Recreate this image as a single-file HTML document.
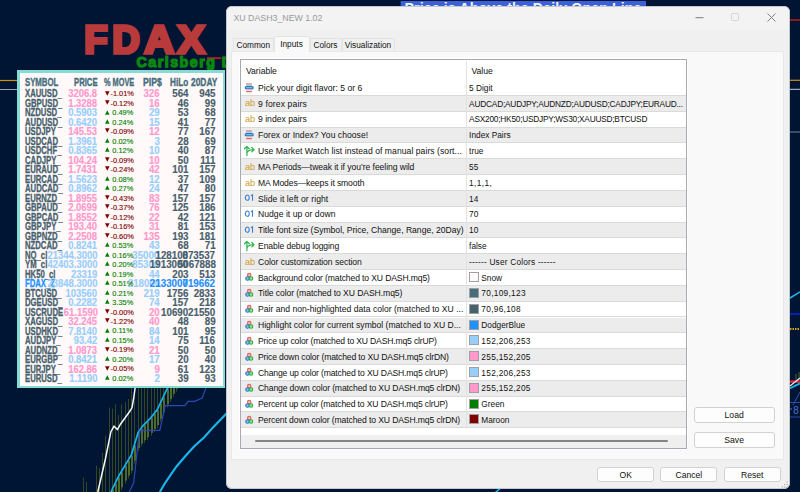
<!DOCTYPE html>
<html><head><meta charset="utf-8"><style>
*{margin:0;padding:0;box-sizing:border-box}
html,body{width:800px;height:492px;overflow:hidden;background:#001533;font-family:"Liberation Sans",sans-serif}
#stage{position:absolute;left:0;top:0;width:800px;height:492px;overflow:hidden}
.a{position:absolute}
.fdax{position:absolute;left:84px;top:18.5px;font:bold 41.5px/42px "Liberation Sans",sans-serif;color:#b93a3c;letter-spacing:1.6px;-webkit-text-stroke:1.2px #b93a3c}
.carl{position:absolute;left:136px;top:53.3px;font:bold 14px/14px "Liberation Sans",sans-serif;color:#0a8a14;white-space:nowrap;letter-spacing:0.9px;-webkit-text-stroke:0.5px #0a8a14}
#dash{position:absolute;left:17px;top:70px;width:208.3px;height:318.3px;background:#84dcd4}
#dashin{position:absolute;left:20px;top:73px;width:203px;height:312.5px;background:#fff9f9}
.b{position:absolute;font:bold 10.5px/10px "Liberation Sans",sans-serif;white-space:nowrap;transform-origin:left top;-webkit-text-stroke:0.15px currentColor}
.b.r{transform-origin:right top}
.p{position:absolute;width:40px;height:8px;font:7.4px/8px "Liberation Sans",sans-serif;white-space:nowrap;-webkit-text-stroke:0.12px currentColor}
#dlg{position:absolute;left:226px;top:6px;width:564px;height:483.2px;background:#f0f0f0;border-radius:6px;box-shadow:inset 0 0 0 1px #c6c8ce}
#tbar{position:absolute;left:227px;top:7px;width:562px;height:23px;background:#f3f3f3;border-radius:5px 5px 0 0}
#ttl{position:absolute;left:233.4px;top:12.5px;font:8.8px/10px "Liberation Sans",sans-serif;color:#9a9a9a;white-space:nowrap}
.tab{position:absolute;top:37.8px;height:13.8px;box-shadow:inset 1px 1px 0 #e4e4e4,inset -1px 0 0 #e4e4e4;background:#f0f0f0;font:8.3px/14px "Liberation Sans",sans-serif;color:#111;text-align:center;white-space:nowrap}
.tab.sel{top:35.8px;height:16.5px;background:#f9f9f9;z-index:2}
#panel{position:absolute;left:231.4px;top:51.2px;width:553px;height:409px;background:#f9f9f9;box-shadow:inset 0 0 0 1px #e8e8e8}
#grid{position:absolute;left:240px;top:59px;width:447.3px;height:390px;border:1px solid #a8aab2;box-shadow:0 0 0 1px #fff;background:#fff}
.hdrt{position:absolute;top:65.8px;font:8.6px/10px "Liberation Sans",sans-serif;color:#111}
.row{position:absolute;left:241px;width:445.3px;height:15.82px;border-bottom:1px solid #dadada}
.icw{position:absolute;left:244.2px;width:12px;height:12px}
.icw svg{display:block}
.ab{position:absolute;left:0.7px;top:0px;font:9.2px/11px "Liberation Sans",sans-serif;color:#cf9a30}
.o1{position:absolute;left:0.5px;top:-1px;font:8.4px/11px "Liberation Sans",sans-serif;color:#2a76c4;letter-spacing:-0.2px}
.nm{position:absolute;left:258px;width:207px;height:11px;font:8.6px/10px "Liberation Sans",sans-serif;color:#111;white-space:nowrap;overflow:hidden}
.vl{position:absolute;width:216px;height:11px;font:8.3px/10px "Liberation Sans",sans-serif;color:#111;white-space:nowrap;overflow:hidden}
.vsep{position:absolute;left:466.3px;top:61px;width:1px;height:368px;background:#e2e2e2}
.sw{position:absolute;left:469.4px;width:10px;height:10px;border:1px solid #a0a0a0}
#hscroll{position:absolute;left:241px;top:435px;width:445.3px;height:13px;background:#efefef}
#thumb{position:absolute;left:255px;top:440.4px;width:413px;height:2px;background:#858585;border-radius:1px}
.btn{position:absolute;border:1px solid #d2d2d2;border-radius:3px;background:#fdfdfd;font:8.6px/14px "Liberation Sans",sans-serif;color:#111;text-align:center}
</style></head><body><div id="stage">
<svg width="800" height="492" style="position:absolute;left:0;top:0">
<line x1="0" y1="80.5" x2="17" y2="80.5" stroke="#d0900f" stroke-width="1.2"/>
<line x1="0" y1="89.5" x2="17" y2="89.5" stroke="#9aa2b4" stroke-width="1"/>
<line x1="83.5" y1="477.6" x2="83.5" y2="492.0" stroke="#36461f" stroke-width="1"/><line x1="86.5" y1="482" x2="86.5" y2="492.0" stroke="#36461f" stroke-width="1"/><line x1="96.5" y1="465.7" x2="96.5" y2="492.0" stroke="#36461f" stroke-width="1"/><line x1="99.5" y1="468" x2="99.5" y2="492.0" stroke="#36461f" stroke-width="1"/><line x1="102.5" y1="452.8" x2="102.5" y2="492.0" stroke="#36461f" stroke-width="1"/><line x1="105.5" y1="435.6" x2="105.5" y2="492.0" stroke="#36461f" stroke-width="1"/><line x1="109.5" y1="407.5" x2="109.5" y2="492.0" stroke="#36461f" stroke-width="1"/><line x1="112.5" y1="408.6" x2="112.5" y2="492.0" stroke="#36461f" stroke-width="1"/><rect x="112.0" y="489.7" width="2" height="15" fill="#506a2a"/><line x1="115.5" y1="404.3" x2="115.5" y2="492.0" stroke="#36461f" stroke-width="1"/><rect x="115.0" y="483.5" width="2" height="15" fill="#506a2a"/><line x1="118.5" y1="415" x2="118.5" y2="492.0" stroke="#36461f" stroke-width="1"/><rect x="118.0" y="477.3" width="2" height="15" fill="#506a2a"/><line x1="121.5" y1="404.3" x2="121.5" y2="490.3" stroke="#36461f" stroke-width="1"/><rect x="121.0" y="472.3" width="2" height="15" fill="#506a2a"/><line x1="125.5" y1="402" x2="125.5" y2="483.6" stroke="#36461f" stroke-width="1"/><rect x="125.0" y="465.6" width="2" height="15" fill="#506a2a"/><line x1="128.5" y1="399" x2="128.5" y2="478.6" stroke="#36461f" stroke-width="1"/><rect x="128.0" y="460.6" width="2" height="15" fill="#506a2a"/><line x1="131.5" y1="380" x2="131.5" y2="473.6" stroke="#36461f" stroke-width="1"/><rect x="131.0" y="455.6" width="2" height="15" fill="#506a2a"/><line x1="134.5" y1="380" x2="134.5" y2="463.5" stroke="#36461f" stroke-width="1"/><rect x="134.0" y="445.5" width="2" height="15" fill="#506a2a"/><line x1="138.5" y1="380" x2="138.5" y2="451.1" stroke="#36461f" stroke-width="1"/><rect x="138.0" y="433.1" width="2" height="15" fill="#506a2a"/><line x1="141.5" y1="380" x2="141.5" y2="446.6" stroke="#36461f" stroke-width="1"/><rect x="141.0" y="428.6" width="2" height="15" fill="#506a2a"/><line x1="144.5" y1="380" x2="144.5" y2="443.2" stroke="#36461f" stroke-width="1"/><rect x="144.0" y="425.2" width="2" height="15" fill="#506a2a"/><line x1="147.5" y1="380" x2="147.5" y2="440.1" stroke="#36461f" stroke-width="1"/><rect x="147.0" y="422.1" width="2" height="15" fill="#506a2a"/><line x1="151.5" y1="380" x2="151.5" y2="435.9" stroke="#36461f" stroke-width="1"/><rect x="151.0" y="417.9" width="2" height="15" fill="#506a2a"/><line x1="154.5" y1="380" x2="154.5" y2="432.0" stroke="#36461f" stroke-width="1"/><rect x="154.0" y="414.0" width="2" height="15" fill="#506a2a"/><line x1="157.5" y1="380" x2="157.5" y2="428.1" stroke="#36461f" stroke-width="1"/><rect x="157.0" y="410.1" width="2" height="15" fill="#506a2a"/><line x1="160.5" y1="380" x2="160.5" y2="421.8" stroke="#36461f" stroke-width="1"/><rect x="160.0" y="403.8" width="2" height="15" fill="#506a2a"/><line x1="163.5" y1="380" x2="163.5" y2="415.4" stroke="#36461f" stroke-width="1"/><rect x="163.0" y="397.4" width="2" height="15" fill="#506a2a"/><line x1="167.5" y1="380" x2="167.5" y2="407.3" stroke="#36461f" stroke-width="1"/><rect x="167.0" y="389.3" width="2" height="15" fill="#506a2a"/><line x1="170.5" y1="380" x2="170.5" y2="402.1" stroke="#36461f" stroke-width="1"/><rect x="170.0" y="384.1" width="2" height="15" fill="#506a2a"/><line x1="173.5" y1="380" x2="173.5" y2="396.9" stroke="#36461f" stroke-width="1"/><rect x="173.0" y="378.9" width="2" height="15" fill="#506a2a"/><line x1="176.5" y1="380" x2="176.5" y2="391.8" stroke="#36461f" stroke-width="1"/><rect x="176.0" y="373.8" width="2" height="15" fill="#506a2a"/><line x1="180.5" y1="380" x2="180.5" y2="384.8" stroke="#36461f" stroke-width="1"/><rect x="180.0" y="366.8" width="2" height="15" fill="#506a2a"/>
<polyline points="97.8,492 105.4,459 110.9,431.7 114,426.3 117.4,429.6 120.6,424 129.3,412 132,407.8 133.7,398 135.4,386" fill="none" stroke="#f8f8f8" stroke-width="1.5"/>
<polyline points="110.9,492 118.5,476.3 131.5,454.6 138,432.8 142.4,426.3 151,417.6 157.6,409 166.3,390.4 170,384" fill="none" stroke="#1ab4e8" stroke-width="1.7"/>
<polyline points="129.3,492 133.7,482.8 138,443.7 140.2,430.4 159.8,430.4 165.2,405.7 184.8,405.7 188,401.3 194.6,401.3 202.2,398 205.4,389.3 207,385" fill="none" stroke="#2a48b0" stroke-width="1.2"/>
<polyline points="159.8,492 164.5,484 169.6,476.3 176.5,466.5 184.8,456.7 194,446.5 204.3,437.2 213,427.4 226,414 232,408" fill="none" stroke="#18b8ec" stroke-width="2.1"/>
<line x1="495.5" y1="492.5" x2="500.5" y2="488" stroke="#18b8ec" stroke-width="1.6"/><line x1="207" y1="58.1" x2="221" y2="58.1" stroke="#d02020" stroke-width="1.6"/>
<rect x="400.6" y="1" width="245.4" height="8" fill="#3c60d8"/><text x="404.5" y="12.8" font-family="Liberation Sans" font-weight="bold" font-size="14.2" fill="#f0f2fa" letter-spacing="0.1">Price is Above the Daily Open Line</text>
<line x1="790" y1="20" x2="800" y2="20" stroke="#c01818" stroke-width="1.5"/>
<line x1="790" y1="80.3" x2="800" y2="80.3" stroke="#d0900f" stroke-width="1.2"/>
<line x1="790" y1="89.3" x2="800" y2="89.3" stroke="#c8ccd8" stroke-width="1"/>
<line x1="790" y1="132" x2="800" y2="132" stroke="#7a8090" stroke-width="1"/>
<line x1="790" y1="298" x2="800" y2="292" stroke="#18b8ec" stroke-width="1.5"/>
<line x1="790" y1="314" x2="800" y2="314" stroke="#0a20e0" stroke-width="1.6"/>
<line x1="790" y1="329" x2="800" y2="329" stroke="#d8a020" stroke-width="2" stroke-dasharray="1.5 1"/>
<line x1="796" y1="382" x2="796" y2="374" stroke="#56632a" stroke-width="1"/>
<line x1="799" y1="382" x2="799" y2="372" stroke="#56632a" stroke-width="1"/>
<line x1="790" y1="381.6" x2="800" y2="381.6" stroke="#e02840" stroke-width="2.5"/>
<line x1="790" y1="386" x2="800" y2="378" stroke="#f0f0f0" stroke-width="1.2"/>
<line x1="790" y1="388.3" x2="800" y2="383.4" stroke="#18b8ec" stroke-width="1.8"/>
<rect x="788.5" y="402.5" width="14" height="14.5" fill="none" stroke="#2f4fb8" stroke-width="0.9"/><text x="793.2" y="413.6" font-family="Liberation Sans" font-size="10" fill="#4a6ed0">8</text><line x1="790" y1="409" x2="792" y2="409" stroke="#4a6ed0" stroke-width="1"/>
<line x1="793" y1="405" x2="800" y2="392" stroke="#3050c0" stroke-width="1"/>
</svg>
<svg width="230" height="80" style="position:absolute;left:0;top:0"><g font-family="Liberation Sans" font-weight="bold" font-size="38" fill="#b83a3a" stroke="#b83a3a" stroke-width="3.5" stroke-linejoin="miter"><text x="84.3" y="52.7">F</text><text x="112.3" y="52.7">D</text><text transform="translate(144.3,52.7) scale(1.08,1)">A</text><text transform="translate(177.6,52.7) scale(1.07,1)">X</text></g></svg>
<svg width="230" height="80" style="position:absolute;left:0;top:0"><text x="136.6" y="67.1" font-family="Liberation Sans" font-weight="bold" font-size="14.2" letter-spacing="1.5" fill="#0b880f" stroke="#0b880f" stroke-width="1.25">Carlsberg D</text></svg>
<div id="dash"></div><div id="dashin"></div>
<span class="b" style="left:24.8px;top:76.58px;color:#466d7b;transform:scaleX(0.74);-webkit-text-stroke:0.35px currentColor">SYMBOL</span><span class="b" style="left:74.4px;top:76.58px;color:#466d7b;transform:scaleX(0.735);-webkit-text-stroke:0.35px currentColor">PRICE</span><span class="b" style="left:103.7px;top:76.58px;color:#466d7b;transform:scaleX(0.7);-webkit-text-stroke:0.35px currentColor">% MOVE</span><span class="b" style="left:143.2px;top:76.58px;color:#466d7b;transform:scaleX(0.83);-webkit-text-stroke:0.35px currentColor">PIP$</span><span class="b" style="left:170.3px;top:76.58px;color:#466d7b;transform:scaleX(0.78);-webkit-text-stroke:0.35px currentColor">HiLo</span><span class="b" style="left:191.3px;top:76.58px;color:#466d7b;transform:scaleX(0.8);-webkit-text-stroke:0.35px currentColor">20DAY</span><span class="b" style="left:24.8px;top:88.48px;color:#46606c;transform:scaleX(0.735);-webkit-text-stroke:0.3px currentColor">XAUUSD_</span><span class="b r" style="right:702.5px;top:88.48px;color:#ff98cd;transform:scaleX(0.9);">3206.8</span><span class="b r" style="right:640.4px;top:88.48px;color:#ff98cd;transform:scaleX(0.92);">326</span><span class="b r" style="right:611.7px;top:88.48px;color:#46606c;transform:scaleX(0.93);">564</span><span class="b r" style="right:584.6px;top:88.48px;color:#46606c;transform:scaleX(0.93);">945</span><div class="p" style="left:105px;top:90.24px;color:#800000"><svg width="5" height="5" viewBox="0 0 5 5" style="position:absolute;left:0;top:0.3px"><path d="M0 0.2H4.6L2.3 4.8Z" fill="#800000"/></svg><span style="position:absolute;left:5.5px;top:0">-1.01%</span></div><span class="b" style="left:24.8px;top:97.97px;color:#46606c;transform:scaleX(0.735);-webkit-text-stroke:0.3px currentColor">GBPUSD_</span><span class="b r" style="right:702.5px;top:97.97px;color:#ff98cd;transform:scaleX(0.9);">1.3288</span><span class="b r" style="right:640.4px;top:97.97px;color:#ff98cd;transform:scaleX(0.92);">16</span><span class="b r" style="right:611.7px;top:97.97px;color:#46606c;transform:scaleX(0.93);">46</span><span class="b r" style="right:584.6px;top:97.97px;color:#46606c;transform:scaleX(0.93);">99</span><div class="p" style="left:105px;top:99.73px;color:#800000"><svg width="5" height="5" viewBox="0 0 5 5" style="position:absolute;left:0;top:0.3px"><path d="M0 0.2H4.6L2.3 4.8Z" fill="#800000"/></svg><span style="position:absolute;left:5.5px;top:0">-0.12%</span></div><span class="b" style="left:24.8px;top:107.46px;color:#46606c;transform:scaleX(0.735);-webkit-text-stroke:0.3px currentColor">NZDUSD_</span><span class="b r" style="right:702.5px;top:107.46px;color:#98cefd;transform:scaleX(0.9);">0.5903</span><span class="b r" style="right:640.4px;top:107.46px;color:#98cefd;transform:scaleX(0.92);">29</span><span class="b r" style="right:611.7px;top:107.46px;color:#46606c;transform:scaleX(0.93);">53</span><span class="b r" style="right:584.6px;top:107.46px;color:#46606c;transform:scaleX(0.93);">68</span><div class="p" style="left:105px;top:109.22px;color:#008000"><svg width="5" height="5" viewBox="0 0 5 5" style="position:absolute;left:0;top:0.3px"><path d="M0 4.8H4.6L2.3 0.2Z" fill="#008000"/></svg><span style="position:absolute;left:7.3px;top:0">0.49%</span></div><span class="b" style="left:24.8px;top:116.95px;color:#46606c;transform:scaleX(0.735);-webkit-text-stroke:0.3px currentColor">AUDUSD_</span><span class="b r" style="right:702.5px;top:116.95px;color:#98cefd;transform:scaleX(0.9);">0.6420</span><span class="b r" style="right:640.4px;top:116.95px;color:#98cefd;transform:scaleX(0.92);">15</span><span class="b r" style="right:611.7px;top:116.95px;color:#46606c;transform:scaleX(0.93);">41</span><span class="b r" style="right:584.6px;top:116.95px;color:#46606c;transform:scaleX(0.93);">77</span><div class="p" style="left:105px;top:118.71px;color:#008000"><svg width="5" height="5" viewBox="0 0 5 5" style="position:absolute;left:0;top:0.3px"><path d="M0 4.8H4.6L2.3 0.2Z" fill="#008000"/></svg><span style="position:absolute;left:7.3px;top:0">0.24%</span></div><span class="b" style="left:24.8px;top:126.44px;color:#46606c;transform:scaleX(0.735);-webkit-text-stroke:0.3px currentColor">USDJPY</span><span class="b r" style="right:702.5px;top:126.44px;color:#ff98cd;transform:scaleX(0.9);">145.53</span><span class="b r" style="right:640.4px;top:126.44px;color:#ff98cd;transform:scaleX(0.92);">12</span><span class="b r" style="right:611.7px;top:126.44px;color:#46606c;transform:scaleX(0.93);">77</span><span class="b r" style="right:584.6px;top:126.44px;color:#46606c;transform:scaleX(0.93);">167</span><div class="p" style="left:105px;top:128.2px;color:#800000"><svg width="5" height="5" viewBox="0 0 5 5" style="position:absolute;left:0;top:0.3px"><path d="M0 0.2H4.6L2.3 4.8Z" fill="#800000"/></svg><span style="position:absolute;left:5.5px;top:0">-0.09%</span></div><span class="b" style="left:24.8px;top:135.93px;color:#46606c;transform:scaleX(0.735);-webkit-text-stroke:0.3px currentColor">USDCAD_</span><span class="b r" style="right:702.5px;top:135.93px;color:#98cefd;transform:scaleX(0.9);">1.3961</span><span class="b r" style="right:640.4px;top:135.93px;color:#98cefd;transform:scaleX(0.92);">3</span><span class="b r" style="right:611.7px;top:135.93px;color:#46606c;transform:scaleX(0.93);">28</span><span class="b r" style="right:584.6px;top:135.93px;color:#46606c;transform:scaleX(0.93);">69</span><div class="p" style="left:105px;top:137.69px;color:#008000"><svg width="5" height="5" viewBox="0 0 5 5" style="position:absolute;left:0;top:0.3px"><path d="M0 4.8H4.6L2.3 0.2Z" fill="#008000"/></svg><span style="position:absolute;left:7.3px;top:0">0.02%</span></div><span class="b" style="left:24.8px;top:145.42px;color:#46606c;transform:scaleX(0.735);-webkit-text-stroke:0.3px currentColor">USDCHF_</span><span class="b r" style="right:702.5px;top:145.42px;color:#98cefd;transform:scaleX(0.9);">0.8365</span><span class="b r" style="right:640.4px;top:145.42px;color:#98cefd;transform:scaleX(0.92);">10</span><span class="b r" style="right:611.7px;top:145.42px;color:#46606c;transform:scaleX(0.93);">40</span><span class="b r" style="right:584.6px;top:145.42px;color:#46606c;transform:scaleX(0.93);">87</span><div class="p" style="left:105px;top:147.18px;color:#008000"><svg width="5" height="5" viewBox="0 0 5 5" style="position:absolute;left:0;top:0.3px"><path d="M0 4.8H4.6L2.3 0.2Z" fill="#008000"/></svg><span style="position:absolute;left:7.3px;top:0">0.12%</span></div><span class="b" style="left:24.8px;top:154.91px;color:#46606c;transform:scaleX(0.735);-webkit-text-stroke:0.3px currentColor">CADJPY_</span><span class="b r" style="right:702.5px;top:154.91px;color:#ff98cd;transform:scaleX(0.9);">104.24</span><span class="b r" style="right:640.4px;top:154.91px;color:#ff98cd;transform:scaleX(0.92);">10</span><span class="b r" style="right:611.7px;top:154.91px;color:#46606c;transform:scaleX(0.93);">50</span><span class="b r" style="right:584.6px;top:154.91px;color:#46606c;transform:scaleX(0.93);">111</span><div class="p" style="left:105px;top:156.67px;color:#800000"><svg width="5" height="5" viewBox="0 0 5 5" style="position:absolute;left:0;top:0.3px"><path d="M0 0.2H4.6L2.3 4.8Z" fill="#800000"/></svg><span style="position:absolute;left:5.5px;top:0">-0.09%</span></div><span class="b" style="left:24.8px;top:164.4px;color:#46606c;transform:scaleX(0.735);-webkit-text-stroke:0.3px currentColor">EURAUD_</span><span class="b r" style="right:702.5px;top:164.4px;color:#ff98cd;transform:scaleX(0.9);">1.7431</span><span class="b r" style="right:640.4px;top:164.4px;color:#ff98cd;transform:scaleX(0.92);">42</span><span class="b r" style="right:611.7px;top:164.4px;color:#46606c;transform:scaleX(0.93);">101</span><span class="b r" style="right:584.6px;top:164.4px;color:#46606c;transform:scaleX(0.93);">157</span><div class="p" style="left:105px;top:166.16px;color:#800000"><svg width="5" height="5" viewBox="0 0 5 5" style="position:absolute;left:0;top:0.3px"><path d="M0 0.2H4.6L2.3 4.8Z" fill="#800000"/></svg><span style="position:absolute;left:5.5px;top:0">-0.24%</span></div><span class="b" style="left:24.8px;top:173.89px;color:#46606c;transform:scaleX(0.735);-webkit-text-stroke:0.3px currentColor">EURCAD_</span><span class="b r" style="right:702.5px;top:173.89px;color:#98cefd;transform:scaleX(0.9);">1.5623</span><span class="b r" style="right:640.4px;top:173.89px;color:#98cefd;transform:scaleX(0.92);">12</span><span class="b r" style="right:611.7px;top:173.89px;color:#46606c;transform:scaleX(0.93);">37</span><span class="b r" style="right:584.6px;top:173.89px;color:#46606c;transform:scaleX(0.93);">109</span><div class="p" style="left:105px;top:175.65px;color:#008000"><svg width="5" height="5" viewBox="0 0 5 5" style="position:absolute;left:0;top:0.3px"><path d="M0 4.8H4.6L2.3 0.2Z" fill="#008000"/></svg><span style="position:absolute;left:7.3px;top:0">0.08%</span></div><span class="b" style="left:24.8px;top:183.38px;color:#46606c;transform:scaleX(0.735);-webkit-text-stroke:0.3px currentColor">AUDCAD_</span><span class="b r" style="right:702.5px;top:183.38px;color:#98cefd;transform:scaleX(0.9);">0.8962</span><span class="b r" style="right:640.4px;top:183.38px;color:#98cefd;transform:scaleX(0.92);">24</span><span class="b r" style="right:611.7px;top:183.38px;color:#46606c;transform:scaleX(0.93);">47</span><span class="b r" style="right:584.6px;top:183.38px;color:#46606c;transform:scaleX(0.93);">80</span><div class="p" style="left:105px;top:185.14px;color:#008000"><svg width="5" height="5" viewBox="0 0 5 5" style="position:absolute;left:0;top:0.3px"><path d="M0 4.8H4.6L2.3 0.2Z" fill="#008000"/></svg><span style="position:absolute;left:7.3px;top:0">0.27%</span></div><span class="b" style="left:24.8px;top:192.87px;color:#46606c;transform:scaleX(0.735);-webkit-text-stroke:0.3px currentColor">EURNZD_</span><span class="b r" style="right:702.5px;top:192.87px;color:#ff98cd;transform:scaleX(0.9);">1.8955</span><span class="b r" style="right:640.4px;top:192.87px;color:#ff98cd;transform:scaleX(0.92);">83</span><span class="b r" style="right:611.7px;top:192.87px;color:#46606c;transform:scaleX(0.93);">157</span><span class="b r" style="right:584.6px;top:192.87px;color:#46606c;transform:scaleX(0.93);">157</span><div class="p" style="left:105px;top:194.63px;color:#800000"><svg width="5" height="5" viewBox="0 0 5 5" style="position:absolute;left:0;top:0.3px"><path d="M0 0.2H4.6L2.3 4.8Z" fill="#800000"/></svg><span style="position:absolute;left:5.5px;top:0">-0.43%</span></div><span class="b" style="left:24.8px;top:202.36px;color:#46606c;transform:scaleX(0.735);-webkit-text-stroke:0.3px currentColor">GBPAUD_</span><span class="b r" style="right:702.5px;top:202.36px;color:#ff98cd;transform:scaleX(0.9);">2.0699</span><span class="b r" style="right:640.4px;top:202.36px;color:#ff98cd;transform:scaleX(0.92);">76</span><span class="b r" style="right:611.7px;top:202.36px;color:#46606c;transform:scaleX(0.93);">125</span><span class="b r" style="right:584.6px;top:202.36px;color:#46606c;transform:scaleX(0.93);">186</span><div class="p" style="left:105px;top:204.12px;color:#800000"><svg width="5" height="5" viewBox="0 0 5 5" style="position:absolute;left:0;top:0.3px"><path d="M0 0.2H4.6L2.3 4.8Z" fill="#800000"/></svg><span style="position:absolute;left:5.5px;top:0">-0.37%</span></div><span class="b" style="left:24.8px;top:211.85px;color:#46606c;transform:scaleX(0.735);-webkit-text-stroke:0.3px currentColor">GBPCAD_</span><span class="b r" style="right:702.5px;top:211.85px;color:#ff98cd;transform:scaleX(0.9);">1.8552</span><span class="b r" style="right:640.4px;top:211.85px;color:#ff98cd;transform:scaleX(0.92);">22</span><span class="b r" style="right:611.7px;top:211.85px;color:#46606c;transform:scaleX(0.93);">42</span><span class="b r" style="right:584.6px;top:211.85px;color:#46606c;transform:scaleX(0.93);">121</span><div class="p" style="left:105px;top:213.61px;color:#800000"><svg width="5" height="5" viewBox="0 0 5 5" style="position:absolute;left:0;top:0.3px"><path d="M0 0.2H4.6L2.3 4.8Z" fill="#800000"/></svg><span style="position:absolute;left:5.5px;top:0">-0.12%</span></div><span class="b" style="left:24.8px;top:221.34px;color:#46606c;transform:scaleX(0.735);-webkit-text-stroke:0.3px currentColor">GBPJPY_</span><span class="b r" style="right:702.5px;top:221.34px;color:#ff98cd;transform:scaleX(0.9);">193.40</span><span class="b r" style="right:640.4px;top:221.34px;color:#ff98cd;transform:scaleX(0.92);">31</span><span class="b r" style="right:611.7px;top:221.34px;color:#46606c;transform:scaleX(0.93);">81</span><span class="b r" style="right:584.6px;top:221.34px;color:#46606c;transform:scaleX(0.93);">153</span><div class="p" style="left:105px;top:223.1px;color:#800000"><svg width="5" height="5" viewBox="0 0 5 5" style="position:absolute;left:0;top:0.3px"><path d="M0 0.2H4.6L2.3 4.8Z" fill="#800000"/></svg><span style="position:absolute;left:5.5px;top:0">-0.16%</span></div><span class="b" style="left:24.8px;top:230.83px;color:#46606c;transform:scaleX(0.735);-webkit-text-stroke:0.3px currentColor">GBPNZD_</span><span class="b r" style="right:702.5px;top:230.83px;color:#ff98cd;transform:scaleX(0.9);">2.2508</span><span class="b r" style="right:640.4px;top:230.83px;color:#ff98cd;transform:scaleX(0.92);">135</span><span class="b r" style="right:611.7px;top:230.83px;color:#46606c;transform:scaleX(0.93);">193</span><span class="b r" style="right:584.6px;top:230.83px;color:#46606c;transform:scaleX(0.93);">181</span><div class="p" style="left:105px;top:232.59px;color:#800000"><svg width="5" height="5" viewBox="0 0 5 5" style="position:absolute;left:0;top:0.3px"><path d="M0 0.2H4.6L2.3 4.8Z" fill="#800000"/></svg><span style="position:absolute;left:5.5px;top:0">-0.60%</span></div><span class="b" style="left:24.8px;top:240.32px;color:#46606c;transform:scaleX(0.735);-webkit-text-stroke:0.3px currentColor">NZDCAD_</span><span class="b r" style="right:702.5px;top:240.32px;color:#98cefd;transform:scaleX(0.9);">0.8241</span><span class="b r" style="right:640.4px;top:240.32px;color:#98cefd;transform:scaleX(0.92);">43</span><span class="b r" style="right:611.7px;top:240.32px;color:#46606c;transform:scaleX(0.93);">68</span><span class="b r" style="right:584.6px;top:240.32px;color:#46606c;transform:scaleX(0.93);">71</span><div class="p" style="left:105px;top:242.08px;color:#008000"><svg width="5" height="5" viewBox="0 0 5 5" style="position:absolute;left:0;top:0.3px"><path d="M0 4.8H4.6L2.3 0.2Z" fill="#008000"/></svg><span style="position:absolute;left:7.3px;top:0">0.53%</span></div><span class="b" style="left:24.8px;top:249.81px;color:#46606c;transform:scaleX(0.735);-webkit-text-stroke:0.3px currentColor">NQ_cl</span><span class="b r" style="right:702.5px;top:249.81px;color:#98cefd;transform:scaleX(0.9);">21344.3000</span><span class="b r" style="right:640.4px;top:249.81px;color:#98cefd;transform:scaleX(0.92);">35000</span><span class="b r" style="right:611.7px;top:249.81px;color:#46606c;transform:scaleX(0.93);">128100</span><span class="b r" style="right:584.6px;top:249.81px;color:#46606c;transform:scaleX(0.93);">873537</span><div class="p" style="left:105px;top:251.57px;color:#008000"><svg width="5" height="5" viewBox="0 0 5 5" style="position:absolute;left:0;top:0.3px"><path d="M0 4.8H4.6L2.3 0.2Z" fill="#008000"/></svg><span style="position:absolute;left:7.3px;top:0">0.16%</span></div><span class="b" style="left:24.8px;top:259.3px;color:#46606c;transform:scaleX(0.735);-webkit-text-stroke:0.3px currentColor">YM_cl</span><span class="b r" style="right:702.5px;top:259.3px;color:#98cefd;transform:scaleX(0.9);">42403.3000</span><span class="b r" style="right:640.4px;top:259.3px;color:#98cefd;transform:scaleX(0.92);">85300</span><span class="b r" style="right:611.7px;top:259.3px;color:#46606c;transform:scaleX(0.93);">1913000</span><span class="b r" style="right:584.6px;top:259.3px;color:#46606c;transform:scaleX(0.93);">5067888</span><div class="p" style="left:105px;top:261.06px;color:#008000"><svg width="5" height="5" viewBox="0 0 5 5" style="position:absolute;left:0;top:0.3px"><path d="M0 4.8H4.6L2.3 0.2Z" fill="#008000"/></svg><span style="position:absolute;left:7.3px;top:0">0.20%</span></div><span class="b" style="left:24.8px;top:268.79px;color:#46606c;transform:scaleX(0.735);-webkit-text-stroke:0.3px currentColor">HK50_cl</span><span class="b r" style="right:702.5px;top:268.79px;color:#98cefd;transform:scaleX(0.9);">23319</span><span class="b r" style="right:640.4px;top:268.79px;color:#98cefd;transform:scaleX(0.92);">44</span><span class="b r" style="right:611.7px;top:268.79px;color:#46606c;transform:scaleX(0.93);">203</span><span class="b r" style="right:584.6px;top:268.79px;color:#46606c;transform:scaleX(0.93);">513</span><div class="p" style="left:105px;top:270.55px;color:#008000"><svg width="5" height="5" viewBox="0 0 5 5" style="position:absolute;left:0;top:0.3px"><path d="M0 4.8H4.6L2.3 0.2Z" fill="#008000"/></svg><span style="position:absolute;left:7.3px;top:0">0.19%</span></div><span class="b" style="left:24.8px;top:278.28px;color:#1e90ff;transform:scaleX(0.735);-webkit-text-stroke:0.3px currentColor">FDAX_Z</span><span class="b r" style="right:702.5px;top:278.28px;color:#98cefd;transform:scaleX(0.9);">23848.3000</span><span class="b r" style="right:640.4px;top:278.28px;color:#98cefd;transform:scaleX(0.92);">218000</span><span class="b r" style="right:611.7px;top:278.28px;color:#1e90ff;transform:scaleX(0.93);">2133000</span><span class="b r" style="right:584.6px;top:278.28px;color:#1e90ff;transform:scaleX(0.93);">719662</span><div class="p" style="left:105px;top:280.04px;color:#008000"><svg width="5" height="5" viewBox="0 0 5 5" style="position:absolute;left:0;top:0.3px"><path d="M0 4.8H4.6L2.3 0.2Z" fill="#008000"/></svg><span style="position:absolute;left:7.3px;top:0">0.51%</span></div><span class="b" style="left:24.8px;top:287.77px;color:#46606c;transform:scaleX(0.735);-webkit-text-stroke:0.3px currentColor">BTCUSD_</span><span class="b r" style="right:702.5px;top:287.77px;color:#98cefd;transform:scaleX(0.9);">103560</span><span class="b r" style="right:640.4px;top:287.77px;color:#98cefd;transform:scaleX(0.92);">219</span><span class="b r" style="right:611.7px;top:287.77px;color:#46606c;transform:scaleX(0.93);">1756</span><span class="b r" style="right:584.6px;top:287.77px;color:#46606c;transform:scaleX(0.93);">2833</span><div class="p" style="left:105px;top:289.53px;color:#008000"><svg width="5" height="5" viewBox="0 0 5 5" style="position:absolute;left:0;top:0.3px"><path d="M0 4.8H4.6L2.3 0.2Z" fill="#008000"/></svg><span style="position:absolute;left:7.3px;top:0">0.21%</span></div><span class="b" style="left:24.8px;top:297.26px;color:#46606c;transform:scaleX(0.735);-webkit-text-stroke:0.3px currentColor">DGEUSD_</span><span class="b r" style="right:702.5px;top:297.26px;color:#98cefd;transform:scaleX(0.9);">0.2282</span><span class="b r" style="right:640.4px;top:297.26px;color:#98cefd;transform:scaleX(0.92);">74</span><span class="b r" style="right:611.7px;top:297.26px;color:#46606c;transform:scaleX(0.93);">157</span><span class="b r" style="right:584.6px;top:297.26px;color:#46606c;transform:scaleX(0.93);">218</span><div class="p" style="left:105px;top:299.02px;color:#008000"><svg width="5" height="5" viewBox="0 0 5 5" style="position:absolute;left:0;top:0.3px"><path d="M0 4.8H4.6L2.3 0.2Z" fill="#008000"/></svg><span style="position:absolute;left:7.3px;top:0">3.35%</span></div><span class="b" style="left:24.8px;top:306.75px;color:#46606c;transform:scaleX(0.735);-webkit-text-stroke:0.3px currentColor">USCRUDE</span><span class="b r" style="right:702.5px;top:306.75px;color:#ff98cd;transform:scaleX(0.9);">61.1590</span><span class="b r" style="right:640.4px;top:306.75px;color:#ff98cd;transform:scaleX(0.92);">20</span><span class="b r" style="right:611.7px;top:306.75px;color:#46606c;transform:scaleX(0.93);">10690</span><span class="b r" style="right:584.6px;top:306.75px;color:#46606c;transform:scaleX(0.93);">21550</span><div class="p" style="left:105px;top:308.51px;color:#800000"><svg width="5" height="5" viewBox="0 0 5 5" style="position:absolute;left:0;top:0.3px"><path d="M0 0.2H4.6L2.3 4.8Z" fill="#800000"/></svg><span style="position:absolute;left:5.5px;top:0">-0.00%</span></div><span class="b" style="left:24.8px;top:316.24px;color:#46606c;transform:scaleX(0.735);-webkit-text-stroke:0.3px currentColor">XAGUSD_</span><span class="b r" style="right:702.5px;top:316.24px;color:#ff98cd;transform:scaleX(0.9);">32.245</span><span class="b r" style="right:640.4px;top:316.24px;color:#ff98cd;transform:scaleX(0.92);">40</span><span class="b r" style="right:611.7px;top:316.24px;color:#46606c;transform:scaleX(0.93);">48</span><span class="b r" style="right:584.6px;top:316.24px;color:#46606c;transform:scaleX(0.93);">89</span><div class="p" style="left:105px;top:318.0px;color:#800000"><svg width="5" height="5" viewBox="0 0 5 5" style="position:absolute;left:0;top:0.3px"><path d="M0 0.2H4.6L2.3 4.8Z" fill="#800000"/></svg><span style="position:absolute;left:5.5px;top:0">-1.22%</span></div><span class="b" style="left:24.8px;top:325.73px;color:#46606c;transform:scaleX(0.735);-webkit-text-stroke:0.3px currentColor">USDHKD_</span><span class="b r" style="right:702.5px;top:325.73px;color:#98cefd;transform:scaleX(0.9);">7.8140</span><span class="b r" style="right:640.4px;top:325.73px;color:#98cefd;transform:scaleX(0.92);">84</span><span class="b r" style="right:611.7px;top:325.73px;color:#46606c;transform:scaleX(0.93);">101</span><span class="b r" style="right:584.6px;top:325.73px;color:#46606c;transform:scaleX(0.93);">95</span><div class="p" style="left:105px;top:327.49px;color:#008000"><svg width="5" height="5" viewBox="0 0 5 5" style="position:absolute;left:0;top:0.3px"><path d="M0 4.8H4.6L2.3 0.2Z" fill="#008000"/></svg><span style="position:absolute;left:7.3px;top:0">0.11%</span></div><span class="b" style="left:24.8px;top:335.22px;color:#46606c;transform:scaleX(0.735);-webkit-text-stroke:0.3px currentColor">AUDJPY_</span><span class="b r" style="right:702.5px;top:335.22px;color:#98cefd;transform:scaleX(0.9);">93.42</span><span class="b r" style="right:640.4px;top:335.22px;color:#98cefd;transform:scaleX(0.92);">14</span><span class="b r" style="right:611.7px;top:335.22px;color:#46606c;transform:scaleX(0.93);">75</span><span class="b r" style="right:584.6px;top:335.22px;color:#46606c;transform:scaleX(0.93);">116</span><div class="p" style="left:105px;top:336.98px;color:#008000"><svg width="5" height="5" viewBox="0 0 5 5" style="position:absolute;left:0;top:0.3px"><path d="M0 4.8H4.6L2.3 0.2Z" fill="#008000"/></svg><span style="position:absolute;left:7.3px;top:0">0.15%</span></div><span class="b" style="left:24.8px;top:344.71px;color:#46606c;transform:scaleX(0.735);-webkit-text-stroke:0.3px currentColor">AUDNZD_</span><span class="b r" style="right:702.5px;top:344.71px;color:#ff98cd;transform:scaleX(0.9);">1.0873</span><span class="b r" style="right:640.4px;top:344.71px;color:#ff98cd;transform:scaleX(0.92);">21</span><span class="b r" style="right:611.7px;top:344.71px;color:#46606c;transform:scaleX(0.93);">50</span><span class="b r" style="right:584.6px;top:344.71px;color:#46606c;transform:scaleX(0.93);">50</span><div class="p" style="left:105px;top:346.47px;color:#800000"><svg width="5" height="5" viewBox="0 0 5 5" style="position:absolute;left:0;top:0.3px"><path d="M0 0.2H4.6L2.3 4.8Z" fill="#800000"/></svg><span style="position:absolute;left:5.5px;top:0">-0.19%</span></div><span class="b" style="left:24.8px;top:354.2px;color:#46606c;transform:scaleX(0.735);-webkit-text-stroke:0.3px currentColor">EURGBP_</span><span class="b r" style="right:702.5px;top:354.2px;color:#98cefd;transform:scaleX(0.9);">0.8421</span><span class="b r" style="right:640.4px;top:354.2px;color:#98cefd;transform:scaleX(0.92);">17</span><span class="b r" style="right:611.7px;top:354.2px;color:#46606c;transform:scaleX(0.93);">20</span><span class="b r" style="right:584.6px;top:354.2px;color:#46606c;transform:scaleX(0.93);">40</span><div class="p" style="left:105px;top:355.96px;color:#008000"><svg width="5" height="5" viewBox="0 0 5 5" style="position:absolute;left:0;top:0.3px"><path d="M0 4.8H4.6L2.3 0.2Z" fill="#008000"/></svg><span style="position:absolute;left:7.3px;top:0">0.20%</span></div><span class="b" style="left:24.8px;top:363.69px;color:#46606c;transform:scaleX(0.735);-webkit-text-stroke:0.3px currentColor">EURJPY_</span><span class="b r" style="right:702.5px;top:363.69px;color:#ff98cd;transform:scaleX(0.9);">162.86</span><span class="b r" style="right:640.4px;top:363.69px;color:#ff98cd;transform:scaleX(0.92);">9</span><span class="b r" style="right:611.7px;top:363.69px;color:#46606c;transform:scaleX(0.93);">61</span><span class="b r" style="right:584.6px;top:363.69px;color:#46606c;transform:scaleX(0.93);">123</span><div class="p" style="left:105px;top:365.45px;color:#800000"><svg width="5" height="5" viewBox="0 0 5 5" style="position:absolute;left:0;top:0.3px"><path d="M0 0.2H4.6L2.3 4.8Z" fill="#800000"/></svg><span style="position:absolute;left:5.5px;top:0">-0.05%</span></div><span class="b" style="left:24.8px;top:373.18px;color:#46606c;transform:scaleX(0.735);-webkit-text-stroke:0.3px currentColor">EURUSD_</span><span class="b r" style="right:702.5px;top:373.18px;color:#98cefd;transform:scaleX(0.9);">1.1190</span><span class="b r" style="right:640.4px;top:373.18px;color:#98cefd;transform:scaleX(0.92);">2</span><span class="b r" style="right:611.7px;top:373.18px;color:#46606c;transform:scaleX(0.93);">39</span><span class="b r" style="right:584.6px;top:373.18px;color:#46606c;transform:scaleX(0.93);">93</span><div class="p" style="left:105px;top:374.94px;color:#008000"><svg width="5" height="5" viewBox="0 0 5 5" style="position:absolute;left:0;top:0.3px"><path d="M0 4.8H4.6L2.3 0.2Z" fill="#008000"/></svg><span style="position:absolute;left:7.3px;top:0">0.02%</span></div>
<div id="dlg"></div>
<div id="tbar"></div>
<div id="ttl">XU DASH3_NEW 1.02</div>
<svg width="120" height="24" style="position:absolute;left:680px;top:6px">
 <line x1="15.5" y1="11.7" x2="23.5" y2="11.7" stroke="#7a7a7a" stroke-width="1"/>
 <rect x="51.5" y="7.5" width="7" height="7" fill="none" stroke="#d4d4d4" stroke-width="1" rx="1"/>
 <path d="M87.5 7.5L95.5 15.5M95.5 7.5L87.5 15.5" stroke="#808080" stroke-width="1"/>
</svg>
<div class="tab" style="left:233px;width:40.5px">Common</div>
<div class="tab sel" style="left:273.5px;width:36px;line-height:16px">Inputs</div>
<div class="tab" style="left:309.5px;width:32px">Colors</div>
<div class="tab" style="left:341.5px;width:53px">Visualization</div>
<div id="panel"></div>
<div id="grid"></div>
<div class="hdrt" style="left:246px">Variable</div>
<div class="hdrt" style="left:471.5px">Value</div>
<div class="row" style="top:80.20px;background:#ffffff"></div><div class="icw" style="top:82.60px"><svg width="12" height="12" viewBox="0 0 12 12"><rect x="2.1" y="0.5" width="5.8" height="1.1" fill="#e05a5a"/><rect x="2.1" y="1.6" width="5.8" height="1.5" fill="#a6d2ea"/><rect x="0.7" y="3.1" width="9.1" height="3.3" rx="1.65" fill="#2a78c0"/><rect x="2" y="4.3" width="6.5" height="0.9" fill="#a6d2ea"/><rect x="2.1" y="6.5" width="5.8" height="1.2" fill="#f4c4c4"/><rect x="2.1" y="8.1" width="5.8" height="1.1" fill="#e05a5a"/></svg></div><div class="nm" style="top:82.80px;letter-spacing:0.025px">Pick your digit flavor: 5 or 6</div><div class="vl" style="left:469.1px;top:82.80px;">5 Digit</div><div class="row" style="top:96.02px;background:#ececec"></div><div class="icw" style="top:98.42px"><span class="ab">ab</span></div><div class="nm" style="top:98.62px;letter-spacing:0.116px">9 forex pairs</div><div class="vl" style="left:469.1px;top:98.62px;letter-spacing:-0.2px;">AUDCAD;AUDJPY;AUDNZD;AUDUSD;CADJPY;EURAUD...</div><div class="row" style="top:111.84px;background:#ffffff"></div><div class="icw" style="top:114.24px"><span class="ab">ab</span></div><div class="nm" style="top:114.44px;letter-spacing:0.005px">9 index pairs</div><div class="vl" style="left:469.1px;top:114.44px;letter-spacing:-0.22px;">ASX200;HK50;USDJPY;WS30;XAUUSD;BTCUSD</div><div class="row" style="top:127.66px;background:#ececec"></div><div class="icw" style="top:130.06px"><svg width="12" height="12" viewBox="0 0 12 12"><rect x="2.1" y="0.5" width="5.8" height="1.1" fill="#e05a5a"/><rect x="2.1" y="1.6" width="5.8" height="1.5" fill="#a6d2ea"/><rect x="0.7" y="3.1" width="9.1" height="3.3" rx="1.65" fill="#2a78c0"/><rect x="2" y="4.3" width="6.5" height="0.9" fill="#a6d2ea"/><rect x="2.1" y="6.5" width="5.8" height="1.2" fill="#f4c4c4"/><rect x="2.1" y="8.1" width="5.8" height="1.1" fill="#e05a5a"/></svg></div><div class="nm" style="top:130.26px;letter-spacing:0.027px">Forex or Index? You choose!</div><div class="vl" style="left:469.1px;top:130.26px;">Index Pairs</div><div class="row" style="top:143.48px;background:#ffffff"></div><div class="icw" style="top:145.88px"><svg width="12" height="12" viewBox="0 0 12 12"><path d="M2.9 9.6V0.8M0.5 2.8L2.9 0.5L5.3 2.8M2.9 7Q3.6 4.2 9.4 3.7M7.8 1.5L10 3.7L7.8 5.9" stroke="#2cb84c" stroke-width="1.25" fill="none" stroke-linecap="round" stroke-linejoin="round"/></svg></div><div class="nm" style="top:146.08px;letter-spacing:0.048px">Use Market Watch list instead of manual pairs (sort...</div><div class="vl" style="left:469.1px;top:146.08px;">true</div><div class="row" style="top:159.30px;background:#ececec"></div><div class="icw" style="top:161.70px"><span class="ab">ab</span></div><div class="nm" style="top:161.90px;letter-spacing:-0.065px">MA Periods—tweak it if you’re feeling wild</div><div class="vl" style="left:469.1px;top:161.90px;">55</div><div class="row" style="top:175.12px;background:#ffffff"></div><div class="icw" style="top:177.52px"><span class="ab">ab</span></div><div class="nm" style="top:177.72px;letter-spacing:-0.127px">MA Modes—keeps it smooth</div><div class="vl" style="left:469.1px;top:177.72px;letter-spacing:0.4px;">1,1,1,</div><div class="row" style="top:190.94px;background:#ececec"></div><div class="icw" style="top:193.34px"><svg width="12" height="12" viewBox="0 0 12 12"><ellipse cx="3.3" cy="4.65" rx="1.95" ry="2.6" stroke="#3580c8" stroke-width="1.05" fill="none"/><path d="M8.5 7.7V1.6L6.9 2.9" stroke="#3580c8" stroke-width="1.1" fill="none" stroke-linejoin="round"/></svg></div><div class="nm" style="top:193.54px;letter-spacing:0.069px">Slide it left or right</div><div class="vl" style="left:469.1px;top:193.54px;">14</div><div class="row" style="top:206.76px;background:#ffffff"></div><div class="icw" style="top:209.16px"><svg width="12" height="12" viewBox="0 0 12 12"><ellipse cx="3.3" cy="4.65" rx="1.95" ry="2.6" stroke="#3580c8" stroke-width="1.05" fill="none"/><path d="M8.5 7.7V1.6L6.9 2.9" stroke="#3580c8" stroke-width="1.1" fill="none" stroke-linejoin="round"/></svg></div><div class="nm" style="top:209.36px;letter-spacing:0.031px">Nudge it up or down</div><div class="vl" style="left:469.1px;top:209.36px;">70</div><div class="row" style="top:222.58px;background:#ececec"></div><div class="icw" style="top:224.98px"><svg width="12" height="12" viewBox="0 0 12 12"><ellipse cx="3.3" cy="4.65" rx="1.95" ry="2.6" stroke="#3580c8" stroke-width="1.05" fill="none"/><path d="M8.5 7.7V1.6L6.9 2.9" stroke="#3580c8" stroke-width="1.1" fill="none" stroke-linejoin="round"/></svg></div><div class="nm" style="top:225.18px;letter-spacing:-0.008px">Title font size (Symbol, Price, Change, Range, 20Day)</div><div class="vl" style="left:469.1px;top:225.18px;">10</div><div class="row" style="top:238.40px;background:#ffffff"></div><div class="icw" style="top:240.80px"><svg width="12" height="12" viewBox="0 0 12 12"><path d="M2.9 9.6V0.8M0.5 2.8L2.9 0.5L5.3 2.8M2.9 7Q3.6 4.2 9.4 3.7M7.8 1.5L10 3.7L7.8 5.9" stroke="#2cb84c" stroke-width="1.25" fill="none" stroke-linecap="round" stroke-linejoin="round"/></svg></div><div class="nm" style="top:241.00px;letter-spacing:-0.098px">Enable debug logging</div><div class="vl" style="left:469.1px;top:241.00px;">false</div><div class="row" style="top:254.22px;background:#ececec"></div><div class="icw" style="top:256.62px"><span class="ab">ab</span></div><div class="nm" style="top:256.82px;letter-spacing:-0.047px">Color customization section</div><div class="vl" style="left:469.1px;top:256.82px;letter-spacing:0.2px;">------ User Colors ------</div><div class="row" style="top:270.04px;background:#ffffff"></div><div class="icw" style="top:272.44px"><svg width="12" height="12" viewBox="0 0 12 12"><circle cx="5.2" cy="3.1" r="1.75" fill="#f4b8b8" stroke="#e26464" stroke-width="1.1"/><circle cx="3.5" cy="6.5" r="1.75" fill="#8cc0ea" stroke="#2a76c4" stroke-width="1.1"/><circle cx="7" cy="6.5" r="1.75" fill="#90e0a0" stroke="#26b044" stroke-width="1.1"/></svg></div><div class="nm" style="top:272.64px;letter-spacing:-0.132px">Background color (matched to XU DASH.mq5)</div><div class="sw" style="top:272.04px;background:#fffafa"></div><div class="vl" style="left:481.3px;top:272.64px;">Snow</div><div class="row" style="top:285.86px;background:#ececec"></div><div class="icw" style="top:288.26px"><svg width="12" height="12" viewBox="0 0 12 12"><circle cx="5.2" cy="3.1" r="1.75" fill="#f4b8b8" stroke="#e26464" stroke-width="1.1"/><circle cx="3.5" cy="6.5" r="1.75" fill="#8cc0ea" stroke="#2a76c4" stroke-width="1.1"/><circle cx="7" cy="6.5" r="1.75" fill="#90e0a0" stroke="#26b044" stroke-width="1.1"/></svg></div><div class="nm" style="top:288.46px;letter-spacing:-0.082px">Title color (matched to XU DASH.mq5)</div><div class="sw" style="top:287.86px;background:#466d7b"></div><div class="vl" style="left:481.3px;top:288.46px;letter-spacing:0.3px;">70,109,123</div><div class="row" style="top:301.68px;background:#ffffff"></div><div class="icw" style="top:304.08px"><svg width="12" height="12" viewBox="0 0 12 12"><circle cx="5.2" cy="3.1" r="1.75" fill="#f4b8b8" stroke="#e26464" stroke-width="1.1"/><circle cx="3.5" cy="6.5" r="1.75" fill="#8cc0ea" stroke="#2a76c4" stroke-width="1.1"/><circle cx="7" cy="6.5" r="1.75" fill="#90e0a0" stroke="#26b044" stroke-width="1.1"/></svg></div><div class="nm" style="top:304.28px;letter-spacing:0.007px">Pair and non-highlighted data color (matched to XU ...</div><div class="sw" style="top:303.68px;background:#46606c"></div><div class="vl" style="left:481.3px;top:304.28px;letter-spacing:0.3px;">70,96,108</div><div class="row" style="top:317.50px;background:#ececec"></div><div class="icw" style="top:319.90px"><svg width="12" height="12" viewBox="0 0 12 12"><circle cx="5.2" cy="3.1" r="1.75" fill="#f4b8b8" stroke="#e26464" stroke-width="1.1"/><circle cx="3.5" cy="6.5" r="1.75" fill="#8cc0ea" stroke="#2a76c4" stroke-width="1.1"/><circle cx="7" cy="6.5" r="1.75" fill="#90e0a0" stroke="#26b044" stroke-width="1.1"/></svg></div><div class="nm" style="top:320.10px;letter-spacing:-0.012px">Highlight color for current symbol (matched to XU D...</div><div class="sw" style="top:319.50px;background:#1e90ff"></div><div class="vl" style="left:481.3px;top:320.10px;">DodgerBlue</div><div class="row" style="top:333.32px;background:#ffffff"></div><div class="icw" style="top:335.72px"><svg width="12" height="12" viewBox="0 0 12 12"><circle cx="5.2" cy="3.1" r="1.75" fill="#f4b8b8" stroke="#e26464" stroke-width="1.1"/><circle cx="3.5" cy="6.5" r="1.75" fill="#8cc0ea" stroke="#2a76c4" stroke-width="1.1"/><circle cx="7" cy="6.5" r="1.75" fill="#90e0a0" stroke="#26b044" stroke-width="1.1"/></svg></div><div class="nm" style="top:335.92px;letter-spacing:-0.166px">Price up color (matched to XU DASH.mq5 clrUP)</div><div class="sw" style="top:335.32px;background:#98cefd"></div><div class="vl" style="left:481.3px;top:335.92px;letter-spacing:0.3px;">152,206,253</div><div class="row" style="top:349.14px;background:#ececec"></div><div class="icw" style="top:351.54px"><svg width="12" height="12" viewBox="0 0 12 12"><circle cx="5.2" cy="3.1" r="1.75" fill="#f4b8b8" stroke="#e26464" stroke-width="1.1"/><circle cx="3.5" cy="6.5" r="1.75" fill="#8cc0ea" stroke="#2a76c4" stroke-width="1.1"/><circle cx="7" cy="6.5" r="1.75" fill="#90e0a0" stroke="#26b044" stroke-width="1.1"/></svg></div><div class="nm" style="top:351.74px;letter-spacing:-0.147px">Price down color (matched to XU DASH.mq5 clrDN)</div><div class="sw" style="top:351.14px;background:#ff98cd"></div><div class="vl" style="left:481.3px;top:351.74px;letter-spacing:0.3px;">255,152,205</div><div class="row" style="top:364.96px;background:#ffffff"></div><div class="icw" style="top:367.36px"><svg width="12" height="12" viewBox="0 0 12 12"><circle cx="5.2" cy="3.1" r="1.75" fill="#f4b8b8" stroke="#e26464" stroke-width="1.1"/><circle cx="3.5" cy="6.5" r="1.75" fill="#8cc0ea" stroke="#2a76c4" stroke-width="1.1"/><circle cx="7" cy="6.5" r="1.75" fill="#90e0a0" stroke="#26b044" stroke-width="1.1"/></svg></div><div class="nm" style="top:367.56px;letter-spacing:-0.152px">Change up color (matched to XU DASH.mq5 clrUP)</div><div class="sw" style="top:366.96px;background:#98cefd"></div><div class="vl" style="left:481.3px;top:367.56px;letter-spacing:0.3px;">152,206,253</div><div class="row" style="top:380.78px;background:#ececec"></div><div class="icw" style="top:383.18px"><svg width="12" height="12" viewBox="0 0 12 12"><circle cx="5.2" cy="3.1" r="1.75" fill="#f4b8b8" stroke="#e26464" stroke-width="1.1"/><circle cx="3.5" cy="6.5" r="1.75" fill="#8cc0ea" stroke="#2a76c4" stroke-width="1.1"/><circle cx="7" cy="6.5" r="1.75" fill="#90e0a0" stroke="#26b044" stroke-width="1.1"/></svg></div><div class="nm" style="top:383.38px;letter-spacing:-0.128px">Change down color (matched to XU DASH.mq5 clrDN)</div><div class="sw" style="top:382.78px;background:#ff98cd"></div><div class="vl" style="left:481.3px;top:383.38px;letter-spacing:0.3px;">255,152,205</div><div class="row" style="top:396.60px;background:#ffffff"></div><div class="icw" style="top:399.00px"><svg width="12" height="12" viewBox="0 0 12 12"><circle cx="5.2" cy="3.1" r="1.75" fill="#f4b8b8" stroke="#e26464" stroke-width="1.1"/><circle cx="3.5" cy="6.5" r="1.75" fill="#8cc0ea" stroke="#2a76c4" stroke-width="1.1"/><circle cx="7" cy="6.5" r="1.75" fill="#90e0a0" stroke="#26b044" stroke-width="1.1"/></svg></div><div class="nm" style="top:399.20px;letter-spacing:-0.138px">Percent up color (matched to XU DASH.mq5 clrUP)</div><div class="sw" style="top:398.60px;background:#008000"></div><div class="vl" style="left:481.3px;top:399.20px;">Green</div><div class="row" style="top:412.42px;background:#ececec"></div><div class="icw" style="top:414.82px"><svg width="12" height="12" viewBox="0 0 12 12"><circle cx="5.2" cy="3.1" r="1.75" fill="#f4b8b8" stroke="#e26464" stroke-width="1.1"/><circle cx="3.5" cy="6.5" r="1.75" fill="#8cc0ea" stroke="#2a76c4" stroke-width="1.1"/><circle cx="7" cy="6.5" r="1.75" fill="#90e0a0" stroke="#26b044" stroke-width="1.1"/></svg></div><div class="nm" style="top:415.02px;letter-spacing:-0.115px">Percent down color (matched to XU DASH.mq5 clrDN)</div><div class="sw" style="top:414.42px;background:#800000"></div><div class="vl" style="left:481.3px;top:415.02px;">Maroon</div>
<div class="vsep"></div>
<div id="hscroll"></div><div id="thumb"></div>
<svg width="12" height="12" style="position:absolute;left:780px;top:478px"><g fill="#9a9a9a"><rect x="6.6" y="3.5" width="1" height="1"/><rect x="6.6" y="6" width="1" height="1"/><rect x="4.2" y="6" width="1" height="1"/><rect x="6.6" y="8.5" width="1" height="1"/><rect x="4.2" y="8.5" width="1" height="1"/><rect x="1.8" y="8.5" width="1" height="1"/></g></svg>
<div class="btn" style="left:693.5px;top:407.2px;width:81.3px;height:16px">Load</div>
<div class="btn" style="left:693.5px;top:431.8px;width:81.3px;height:16px">Save</div>
<div class="btn" style="left:597.4px;top:467.2px;width:56.8px;height:15.3px">OK</div>
<div class="btn" style="left:660.3px;top:467.2px;width:57.2px;height:15.3px">Cancel</div>
<div class="btn" style="left:723.5px;top:467.2px;width:57.5px;height:15.3px">Reset</div>
</div></body></html>
